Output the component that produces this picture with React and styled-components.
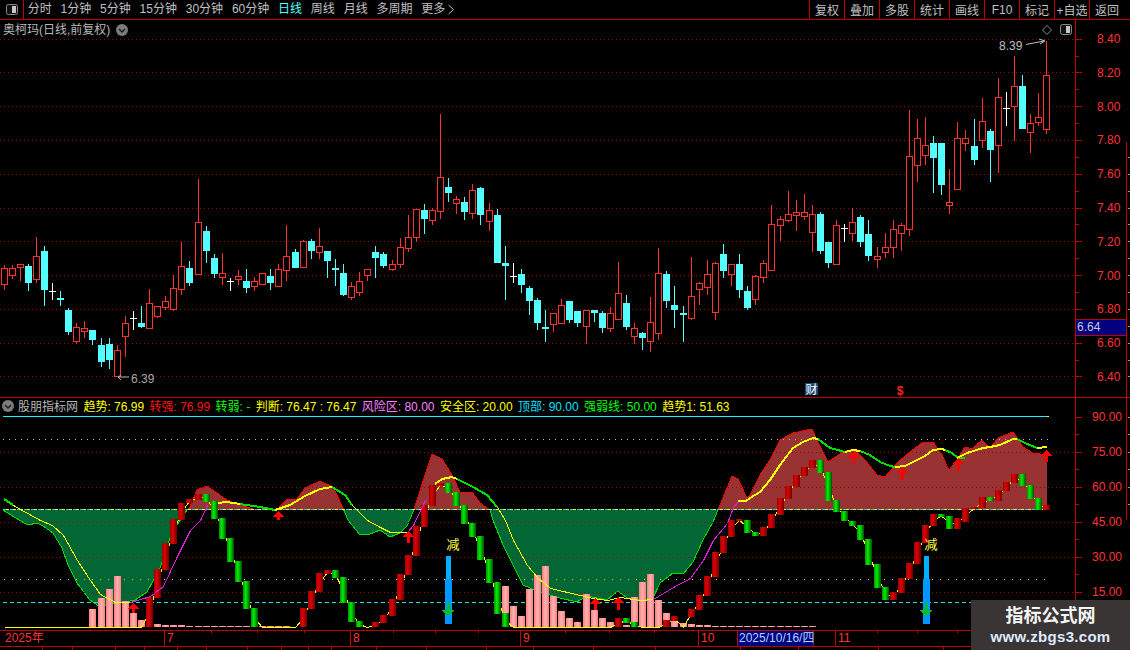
import React from 'react';
import styled, { createGlobalStyle } from 'styled-components';

const CJK = `"Liberation Sans", "Noto Sans CJK SC", sans-serif`;
const RED_LINE = '#c00000';
const AXIS_RED = '#ff3232';
const GRID_RED = '#8a0c0c';

const GlobalStyle = createGlobalStyle`
  html, body {
    margin: 0;
    background: #000;
    overflow: hidden;
  }
`;

const Screen = styled.div`
  position: relative;
  display: flex;
  flex-direction: column;
  width: 1130px;
  height: 650px;
  background: #000;
  overflow: hidden;
  font-family: ${CJK};
  font-size: 12px;
  color: #c0c0c0;
`;

const Toolbar = styled.div`
  display: flex;
  justify-content: space-between;
  height: 19px;
  flex: none;
  border-bottom: 1px solid ${RED_LINE};
`;

const NavGroup = styled.div`
  display: flex;
  align-items: center;
  gap: 8.8px;
`;

const IconCell = styled.div`
  display: flex;
  align-items: center;
  justify-content: center;
  width: 23px;
  height: 19px;
  margin-right: -5px;
  border-right: 1px solid ${RED_LINE};
`;

const NavItem = styled.span`
  line-height: 19px;
  white-space: nowrap;
  display: inline-flex;
  align-items: center;
  gap: 2px;
  color: ${(p) => (p.$active ? '#54ffff' : '#c0c0c0')};
`;

const ToolGroup = styled.div`
  display: flex;
`;

const ToolButton = styled.div`
  display: flex;
  align-items: center;
  justify-content: center;
  box-sizing: border-box;
  width: ${(p) => (p.$wide ? '41px' : '35px')};
  height: 19px;
  padding-right: ${(p) => (p.$wide ? '6px' : '0')};
  border-left: 1px solid ${RED_LINE};
  white-space: nowrap;
`;

const Pane = styled.div`
  display: flex;
  flex: none;
  box-sizing: border-box;
  height: ${(p) => p.$height}px;
  border-top: ${(p) => (p.$ruled ? `1px solid ${RED_LINE}` : 'none')};
`;

const Plot = styled.div`
  position: relative;
  width: 1075px;
  height: 100%;
  flex: none;
  svg {
    display: block;
  }
`;

const Axis = styled.div`
  position: relative;
  flex: 1;
  height: 100%;
  svg {
    display: block;
  }
`;

const PriceTag = styled.div`
  position: absolute;
  left: 1px;
  top: 299px;
  box-sizing: border-box;
  width: 51px;
  height: 17px;
  padding-left: 1px;
  line-height: 15px;
  background: #000080;
  border-top: 1px solid ${RED_LINE};
  border-bottom: 1px solid ${RED_LINE};
  border-right: 1px solid ${RED_LINE};
  color: #c8c8d8;
`;

const ChartTitle = styled.div`
  position: absolute;
  top: 2px;
  left: 3px;
  display: flex;
  align-items: center;
  gap: 6px;
  line-height: 16px;
  color: #b8b8b8;
`;

const Legend = styled.div`
  position: absolute;
  top: 0;
  left: 2px;
  display: flex;
  align-items: center;
  gap: 5.4px;
  height: 15px;
  white-space: nowrap;
`;

const LegendName = styled.span`
  display: flex;
  align-items: center;
  gap: 4px;
  color: #b8b8b8;
`;

const LegendItem = styled.span`
  color: ${(p) => p.$color};
`;

const TimeAxis = styled.div`
  position: relative;
  display: flex;
  flex: none;
  height: 15px;
  border-top: 1px solid ${RED_LINE};
  border-bottom: 1px solid ${RED_LINE};
  color: ${AXIS_RED};
  font-size: 12px;
  line-height: 15px;
`;

const TimeCell = styled.div`
  box-sizing: border-box;
  width: ${(p) => p.$width}px;
  padding-left: ${(p) => (p.$first ? '5px' : '2px')};
  border-left: ${(p) => (p.$first ? 'none' : `1px solid ${RED_LINE}`)};
  overflow: hidden;
  white-space: nowrap;
`;

const DateCell = styled.div`
  box-sizing: border-box;
  width: 77px;
  padding-left: 1px;
  background: #000080;
  border-left: 1px solid ${RED_LINE};
  border-right: 1px solid ${RED_LINE};
  color: #a8d8ff;
  font-size: 12px;
  white-space: nowrap;
`;

const TickLayer = styled.svg`
  position: absolute;
  left: 0;
  top: 0;
`;

const BottomTabs = styled.div`
  display: flex;
  flex: 1;
`;

const BottomTab = styled.div`
  box-sizing: border-box;
  width: ${(p) => p.$width}px;
  border-right: 1px solid ${RED_LINE};
`;

const Watermark = styled.div`
  position: absolute;
  right: 0;
  bottom: 0;
  display: flex;
  flex-direction: column;
  align-items: center;
  width: 159px;
  height: 50px;
  padding-top: 4px;
  box-sizing: border-box;
  background: #3a3535;
  font-weight: 700;
`;

const WatermarkTitle = styled.div`
  font-size: 18px;
  line-height: 24px;
  color: #f4f4f4;
`;

const WatermarkUrl = styled.div`
  font-size: 15px;
  line-height: 17px;
  letter-spacing: 0.3px;
  color: #dfeaff;
`;

const NAV = ['分时', '1分钟', '5分钟', '15分钟', '30分钟', '60分钟', '日线', '周线', '月线', '多周期'];
const TOOLS = ['复权', '叠加', '多股', '统计', '画线', 'F10', '标记', '+自选'];

const candleX = (i) => 4 + i * 8 + Math.floor(i / 12);

// price candles, values read at 3x: [type, wick top, body top, body bottom, wick bottom]
const rowsA = [
  ['r',106,115,161,179],['r',106,115,134,147],['r',102,102,110,153],['c',102,108,159,183],['r',22,79,146,159],
  ['c',48,63,180,228],['w',159,184,184,210],['c',183,204,209,228],['c',234,240,306,315],['r',280,292,332,342],
  ['r',273,295,302,324],['c',300,300,330,345],['c',324,345,396,411],['c',324,342,390,417],['r',346,361,439,439],
  ['r',259,280,317,381],['w',243,265,265,300],['c',228,279,291,294],['r',177,220,293,293],['r',229,229,257,264],
  ['r',198,214,231,240],['r',134,175,236,243],['r',36,109,177,195],['c',93,114,159,168],['r',-153,-24,131,131],
  ['c',-12,3,63,99],['c',72,84,132,144],['r',69,130,140,165],['w',144,154,154,183],['r',120,139,146,165],
  ['c',117,153,174,189],['r',141,154,167,183],['r',130,130,161,165],['c',117,138,159,180],['r',102,118,167,167],
  ['r',-15,79,119,153],['c',57,66,114,114],['r',30,34,110,114],['c',27,33,63,87],['r',-6,49,65,87],
  ['c',63,63,93,144],['c',87,114,118,168],['c',102,129,195,198],['r',156,169,201,210],['r',126,154,185,198],
  ['r',118,118,134,153],['c',48,66,84,144],
];
const rowsB = [
  ['c',456,462,498,504],['r',480,493,506,513],['r',414,442,491,504],['r',345,412,443,456],['r',328,328,410,426],
  ['c',312,330,357,402],['r',324,331,359,375],['r',42,232,332,357],['c',234,261,279,306],['r',288,298,308,342],
  ['c',291,306,336,360],['r',252,271,339,357],['c',261,264,345,375],['r',309,331,362,393],['c',327,345,489,489],
  ['c',438,489,498,600],['w',489,528,528,549],['c',507,522,555,579],['c',558,564,603,645],['c',594,600,669,690],
  ['c',630,681,684,726],['r',640,640,671,696],['r',597,616,668,669],['c',603,603,660,669],['c',633,633,669,681],
  ['r',631,631,677,732],['c',630,630,639,666],['c',633,639,684,699],['r',621,640,683,696],['r',486,580,656,656],
  ['c',585,609,681,690],['r',669,685,707,732],['c',696,699,714,750],['r',591,667,722,756],['r',444,520,698,720],
  ['c',513,522,603,624],['c',558,615,630,684],['c',618,639,645,726],['r',471,589,653,660],['r',546,550,567,615],
  ['r',480,523,560,585],['r',486,490,635,660],['c',432,462,513,534],['r',493,493,521,558],['c',462,492,570,594],
  ['c',558,573,624,630],['r',526,529,596,615],
  ['r',480,490,530,548],['r',315,373,510,513],['r',348,358,374,423],['r',273,343,359,366],['r',300,337,344,393],
  ['r',282,337,347,360],['r',315,343,395,456],['c',336,342,453,462],['c',426,426,489,504],['r',360,376,491,491],
  ['w',372,384,384,426],['r',324,367,398,423],['c',345,351,426,441],['c',360,402,468,483],['r',441,469,476,504],
  ['r',399,442,455,474],['r',360,388,440,474],['r',369,376,398,453],['r',30,169,388,408],['r',57,115,196,246],
  ['r',51,136,166,195],['c',108,129,174,279],['c',129,129,255,285],['r',207,307,314,342],['r',66,115,266,266],
  ['r',90,115,130,153],['c',57,138,180,195],
];
const rowsC = [
  ['r',295,364,419,444],['c',387,393,450,546],['r',234,292,436,519],['w',276,323,323,378],['r',168,259,319,423],
  ['c',225,258,386,386],['r',342,370,395,459],['r',279,350,365,378],['r',123,226,386,403],
];
const toPx = (rows, offset) =>
  rows.map(([t, a, b, c, d]) => [t, a, b, c, d].map((v, n) => (n === 0 ? v : Math.round(offset + v / 3))));
const CANDLES = [...toPx(rowsA, 230), ...toPx(rowsB, 100), ...toPx(rowsC, 0)];

const PRICES = ['8.40', '8.20', '8.00', '7.80', '7.60', '7.40', '7.20', '7.00', '6.80', '6.60', '6.40'];
const priceY = (n) => 38.6 + n * 33.78;

function Candle({ i, row }) {
  const [type, wt, bt, bb, wb] = row;
  const x = candleX(i);
  if (type === 'w') {
    return (
      <g fill="#fff">
        <rect x={x} y={wt} width="1" height={wb - wt} />
        <rect x={x - 3} y={bt} width="7" height="1" />
      </g>
    );
  }
  if (type === 'c') {
    return (
      <g fill="#54ffff">
        <rect x={x} y={wt} width="1" height={wb - wt} />
        <rect x={x - 3} y={bt} width="7" height={Math.max(bb - bt, 2)} />
      </g>
    );
  }
  return (
    <g fill="#ff3232">
      <rect x={x} y={wt} width="1" height={Math.max(bt - wt, 0)} />
      <rect x={x} y={bb} width="1" height={Math.max(wb - bb, 0)} />
      <rect x={x - 2.5} y={bt + 0.5} width="6" height={Math.max(bb - bt, 1)} fill="#000" stroke="#ff3232" />
    </g>
  );
}

function PanelIcon({ x = 0, y = 0 }) {
  return (
    <g transform={`translate(${x} ${y})`}>
      <rect x="0.5" y="0.5" width="11" height="10" rx="2" fill="#111" stroke="#8a8a8a" />
      <rect x="6" y="2" width="4" height="7" fill="#c8c8c8" />
    </g>
  );
}

function CircleDown() {
  return (
    <svg width="12" height="12" viewBox="0 0 12 12">
      <circle cx="6" cy="6" r="6" fill="#7c7c7c" />
      <path d="M3 5 L6 8 L9 5" fill="none" stroke="#1c1c1c" strokeWidth="1.5" />
    </svg>
  );
}

function PriceChart() {
  return (
    <svg width="1075" height="377" viewBox="0 20 1075 377">
      {PRICES.map((p, n) => (
        <line key={p} x1="0" x2="1075" y1={Math.round(priceY(n)) + 0.5} y2={Math.round(priceY(n)) + 0.5}
          stroke={GRID_RED} strokeDasharray="1 3" shapeRendering="crispEdges" />
      ))}
      <g shapeRendering="crispEdges">
        {CANDLES.map((row, i) => <Candle key={i} i={i} row={row} />)}
      </g>
      <text x="999" y="50" fill="#c0c0c0" fontSize="12" fontFamily="Liberation Sans">8.39</text>
      <path d="M1026 44.5 L1044 41 M1039 39 L1045 41 L1040 44" fill="none" stroke="#c0c0c0" />
      <text x="131" y="383" fill="#a8a8a8" fontSize="12" fontFamily="Liberation Sans">6.39</text>
      <path d="M129 377 L118 377 M121 375 L118 377 L121 380" fill="none" stroke="#b0b0b0" />
      <path d="M1047 25.5 L1051.5 30 L1047 34.5 L1042.5 30 Z" fill="none" stroke="#8a8a8a" />
      <PanelIcon x={1060} y={24} />
      <rect x="805" y="383" width="13" height="12" fill="#1a4a7a" />
      <text x="811.5" y="393.5" fill="#fff" fontSize="12" textAnchor="middle" fontFamily={CJK}>财</text>
      <text x="900" y="395" fill="#ff2020" fontSize="12" fontWeight="700" textAnchor="middle" fontFamily="Liberation Sans">$</text>
    </svg>
  );
}

function ValueAxis({ height, top, labels, ticks, edgeTop, edgeBottom }) {
  return (
    <svg width="55" height={height} viewBox={`1075 ${top} 55 ${height}`}>
      <line x1="1075.5" x2="1075.5" y1={top} y2={top + height} stroke={RED_LINE} />
      {ticks.map((t) => (
        <rect key={t.y} x="1075" y={Math.round(t.y)} width={t.major ? 7 : 4} height="1" fill={RED_LINE} />
      ))}
      <line x1="1126.5" x2="1126.5" y1={edgeTop} y2={edgeBottom} stroke={RED_LINE} />
      {ticks.map((t) => (
        t.y > edgeTop && t.y < edgeBottom
          ? <rect key={t.y} x="1128" y={Math.round(t.y)} width="2" height="1" fill="#a0a0a0" />
          : null
      ))}
      {labels.map((l) => (
        <text key={l.text} x={l.x} y={l.y + 4.5} fill={AXIS_RED} fontSize="12" fontFamily="Liberation Sans">{l.text}</text>
      ))}
    </svg>
  );
}

const upperTicks = [];
PRICES.forEach((_, n) => {
  upperTicks.push({ y: priceY(n), major: true });
  if (n < PRICES.length - 1) upperTicks.push({ y: priceY(n) + 16.9, major: false });
});
const upperLabels = PRICES.map((p, n) => ({ text: p, x: 1097, y: priceY(n) }));

// lower pane
const levelY = (v) => 416.7 + (90 - v) * (35 / 15);
const lowerTicks = [];
[90, 75, 60, 45, 30, 15].forEach((v) => {
  lowerTicks.push({ y: levelY(v), major: true });
  lowerTicks.push({ y: levelY(v) + 17.5, major: false });
});
const lowerLabels = [90, 75, 60, 45, 30, 15].map((v) => ({ text: `${v}.00`, x: 1092, y: levelY(v) }));

const ENVELOPE = [
  [3,510],[19,520],[28,525],[37,523],[43,526],[53,533],[62,548],[68,565],[77,583],[90,600],[100,607],[110,604],
  [125,602],[135,600],[147,592],[160,568],[170,538],[177,525],[187,510],[190,507],[197,490],[207,486],[217,493],
  [227,500],[240,505],[253,509],[277,510],[287,499],[297,499],[305,488],[320,481],[333,487],[343,508],[348,520],
  [360,535],[370,534],[380,530],[390,537],[400,533],[407,526],[413,512],[432,454],[442,459],[452,475],[460,492],
  [472,492],[480,503],[490,510],[493,520],[503,545],[513,565],[523,585],[537,591],[550,595],[560,598],[577,602],
  [587,596],[607,600],[618,591],[627,598],[643,600],[653,598],[660,583],[673,573],[683,574],[693,562],[703,540],
  [713,522],[718,510],[732,476],[738,479],[747,498],[750,495],[760,475],[770,460],[780,440],[793,433],[812,429],
  [817,440],[828,462],[843,452],[853,449],[865,460],[877,475],[885,477],[898,462],[910,452],[923,442],[933,442],
  [942,455],[949,470],[957,460],[965,447],[972,449],[982,440],[990,448],[998,438],[1013,432],[1023,447],[1033,453],
  [1047,455],[1047,510],
];

// thick and thin stretches of the trend line, in drawing order
const TREND = [
  { c: '#00e000', w: 2, p: [[4,499],[13,505]] },
  { c: '#ffff00', w: 1, p: [[13,505],[20,509],[40,520],[52,525],[63,535],[77,560],[90,580],[100,594],[115,602],[130,602]] },
  { c: '#e020e0', w: 1, p: [[130,602],[150,596],[163,586],[177,556],[190,530],[200,520],[207,505]] },
  { c: '#ffff00', w: 2, p: [[218,503],[227,502],[240,504]] },
  { c: '#00e000', w: 2, p: [[240,504],[260,507],[275,510]] },
  { c: '#ffff00', w: 2, p: [[275,510],[290,505],[305,496],[320,489],[332,487]] },
  { c: '#00e000', w: 2, p: [[332,487],[345,495],[352,505]] },
  { c: '#ffff00', w: 1, p: [[352,505],[367,520],[380,527],[390,532],[407,532]] },
  { c: '#e020e0', w: 1, p: [[407,532],[413,525],[425,500]] },
  { c: '#ffff00', w: 2, p: [[435,484],[442,479],[452,477],[457,479]] },
  { c: '#00e000', w: 2, p: [[457,479],[473,487],[487,495],[497,507]] },
  { c: '#ffff00', w: 1, p: [[497,507],[505,520],[513,540],[527,565],[537,577],[550,588],[580,595],[593,598],[607,600],[620,597],[640,600],[653,599]] },
  { c: '#e020e0', w: 1, p: [[653,599],[673,587],[690,578],[703,560],[713,540],[727,523],[733,507],[738,501]] },
  { c: '#ffff00', w: 2, p: [[738,501],[746,501],[750,498],[760,492],[770,480],[780,465],[793,448],[803,442],[813,438],[818,439]] },
  { c: '#00e000', w: 2, p: [[818,439],[830,448],[845,452]] },
  { c: '#ffff00', w: 2, p: [[845,452],[853,450],[860,451]] },
  { c: '#00e000', w: 2, p: [[860,451],[870,455],[880,462],[890,466],[895,467]] },
  { c: '#ffff00', w: 2, p: [[895,467],[905,466],[915,461],[925,456],[933,450],[942,449],[945,450]] },
  { c: '#00e000', w: 2, p: [[945,450],[952,453],[958,458],[965,458]] },
  { c: '#ffff00', w: 2, p: [[957,458],[967,453],[983,448],[990,447],[1000,445],[1013,439],[1017,439]] },
  { c: '#00e000', w: 2, p: [[1017,439],[1025,443],[1037,448]] },
  { c: '#ffff00', w: 2, p: [[1037,448],[1047,447]] },
];

// oscillator candles: index -> [colour, top, bottom]
const OSC = {
  18:['r',597,627],19:['r',569,598],20:['r',543,570],21:['r',519,544],22:['r',503,520],23:['r',499,503],24:['r',494,500],
  25:['g',494,502],26:['g',501,519],27:['g',518,539],28:['g',538,562],29:['g',561,582],30:['g',581,609],31:['g',608,627],
  37:['r',608,627],38:['r',591,609],39:['r',573,592],40:['r',570,574],41:['g',570,578],42:['g',577,603],43:['g',602,622],44:['g',621,627],
  46:['r',622,627],47:['r',615,623],48:['r',599,616],49:['r',574,600],50:['r',555,575],51:['r',526,556],52:['r',505,527],53:['r',485,506],54:['r',483,486],
  55:['g',483,493],56:['g',492,506],57:['g',505,524],58:['g',523,537],59:['g',536,560],60:['g',559,583],61:['g',582,614],62:['g',613,627],
  76:['r',618,627],77:['g',618,623],78:['g',622,627],82:['r',620,627],83:['r',616,621],85:['r',609,617],86:['r',595,610],87:['r',576,596],88:['r',552,577],
  89:['r',536,553],90:['r',520,537],91:['r',519,521],92:['g',520,533],93:['g',532,536],94:['r',527,536],95:['r',514,528],96:['r',498,515],97:['r',486,499],
  98:['r',475,487],99:['r',467,476],100:['r',460,468],101:['g',460,473],102:['g',472,501],103:['g',500,512],104:['g',511,521],105:['g',521,526],
  106:['g',525,540],107:['g',539,565],108:['g',564,588],109:['g',587,600],110:['r',592,600],111:['r',578,593],112:['r',563,579],113:['r',542,564],
  114:['r',525,543],115:['r',514,526],116:['g',514,517],117:['g',516,529],118:['r',518,529],119:['r',508,522],120:['r',507,509],121:['r',497,508],
  122:['g',497,501],123:['r',490,501],124:['r',482,491],125:['r',474,483],126:['g',474,486],127:['g',485,499],128:['g',498,510],129:['r',505,510],
};

// pink bars: index -> top
const PINK = {
  11:609,12:598,13:589,14:576,15:601,16:613,17:620,19:624,
  62:586,63:606,64:616,65:589,66:575,67:566,68:596,69:611,70:618,71:622,72:594,73:610,74:618,75:622,
  77:625,78:597,79:582,80:574,81:600,82:613,83:621,84:623,85:624,86:625,87:625,88:626,
};
for (let i = 20; i <= 35; i++) PINK[i] = i < 23 ? 625 : 626;
for (let i = 89; i <= 100; i++) PINK[i] = 626;

const UP_ARROWS = [[133.5,603,613],[278,511,520],[408,531,543],[595,598,610],[618,597,610],[853,452,463],[902,467,480],[958,458,471],[1046,450,462]];
const BLUE_BARS = [448, 926];

const pts = (p) => p.map(([x, y]) => `${x},${y}`).join(' ');

const oscLine = () => {
  const out = [];
  for (let i = 0; i < 130; i++) {
    const o = OSC[i];
    out.push([candleX(i), o ? (o[1] + o[2]) / 2 : 627]);
  }
  return out;
};

function UpArrow({ x, top, bottom }) {
  return (
    <path d={`M${x} ${top} L${x + 6} ${top + 6} L${x + 1.5} ${top + 6} L${x + 1.5} ${bottom} L${x - 1.5} ${bottom} L${x - 1.5} ${top + 6} L${x - 6} ${top + 6} Z`} fill="#ff0000" />
  );
}

function SignalBar({ x }) {
  return (
    <g>
      <rect x={x - 2.5} y="556" width="5" height="23" fill="#00b0ff" />
      <rect x={x - 3.5} y="579" width="7" height="45" fill="#0098ff" />
      <path d={`M${x} 617 L${x + 6} 610 L${x + 1.5} 610 L${x + 1.5} 603 L${x - 1.5} 603 L${x - 1.5} 610 L${x - 6} 610 Z`} fill="#00c030" />
      <text x={x + 5} y="549" fill="#ffff40" fontSize="13" textAnchor="middle" fontFamily={CJK}>减</text>
    </g>
  );
}

function IndicatorChart() {
  const envLine = pts(ENVELOPE.slice(0, -1));
  return (
    <svg width="1075" height="232" viewBox="0 398 1075 232">
      <defs>
        <clipPath id="aboveMid"><rect x="0" y="398" width="1075" height="112" /></clipPath>
        <clipPath id="belowMid"><rect x="0" y="510" width="1075" height="120" /></clipPath>
        <linearGradient id="oscGreen" x1="0" x2="1" y1="0" y2="0">
          <stop offset="0" stopColor="#009000" />
          <stop offset="0.4" stopColor="#00f000" />
          <stop offset="1" stopColor="#005000" />
        </linearGradient>
        <linearGradient id="oscRed" x1="0" x2="1" y1="0" y2="0">
          <stop offset="0" stopColor="#a00000" />
          <stop offset="0.4" stopColor="#e00000" />
          <stop offset="1" stopColor="#700000" />
        </linearGradient>
        <linearGradient id="pinkBar" x1="0" x2="1" y1="0" y2="0">
          <stop offset="0" stopColor="#ff7f7f" />
          <stop offset="0.5" stopColor="#ffb0b0" />
          <stop offset="1" stopColor="#ff7f7f" />
        </linearGradient>
      </defs>

      <polygon points={pts(ENVELOPE)} fill="#993333" clipPath="url(#aboveMid)" />
      <polygon points={pts(ENVELOPE)} fill="#036635" clipPath="url(#belowMid)" />
      <g shapeRendering="crispEdges">
        <polyline points={envLine} fill="none" stroke="#ff0000" clipPath="url(#aboveMid)" />
        <polyline points={envLine} fill="none" stroke="#00e000" clipPath="url(#belowMid)" />

        <line x1="3" x2="1047" y1="416.5" y2="416.5" stroke="#00ffff" />
        <line x1="1047" x2="1049" y1="416.5" y2="416.5" stroke="#ffff00" />
        <line x1="3" x2="1049" y1="439.5" y2="439.5" stroke="#e0a0e0" strokeDasharray="1 5" />
        {[75, 60, 45, 30, 15].map((v) => (
          <line key={v} x1="0" x2="1075" y1={Math.round(levelY(v)) + 0.5} y2={Math.round(levelY(v)) + 0.5}
            stroke={GRID_RED} strokeDasharray="1 3" />
        ))}
        <line x1="3" x2="1047" y1="509.5" y2="509.5" stroke="#20d8d8" strokeDasharray="4 3" />
        <line x1="6" x2="1047" y1="509.5" y2="509.5" stroke="#ffff20" strokeDasharray="3 4" />
        <line x1="4" x2="1047" y1="579.5" y2="579.5" stroke="#ffff30" strokeDasharray="1 7" />
        <line x1="3" x2="1047" y1="602.5" y2="602.5" stroke="#20e0e0" strokeDasharray="4 3" />

        {Object.entries(PINK).map(([i, top]) => (
          <rect key={i} x={candleX(+i) - 3} y={top} width="7" height={627 - top} fill="url(#pinkBar)" />
        ))}
        <polyline points={pts(oscLine())} fill="none" stroke="#ffff00" transform="translate(0.5 0.5)" />
        {Object.entries(OSC).map(([i, [c, top, bottom]]) => (
          <rect key={i} x={candleX(+i) - 3} y={top} width="7" height={bottom - top}
            fill={c === 'g' ? 'url(#oscGreen)' : 'url(#oscRed)'} />
        ))}
        {TREND.map((t, n) => (
          <polyline key={n} points={pts(t.p)} fill="none" stroke={t.c} strokeWidth={t.w}
            transform={t.w === 1 ? 'translate(0.5 0.5)' : undefined} />
        ))}
        {UP_ARROWS.map(([x, top, bottom]) => <UpArrow key={x} x={x} top={top} bottom={bottom} />)}
        {BLUE_BARS.map((x) => <SignalBar key={x} x={x} />)}
      </g>
    </svg>
  );
}

const LEGEND = [
  ['#ffff00', '趋势: 76.99'],
  ['#ff1010', '转强: 76.99'],
  ['#00ff00', '转弱: -'],
  ['#ffff00', '判断: 76.47 : 76.47'],
  ['#ff80ff', '风险区: 80.00'],
  ['#ffff00', '安全区: 20.00'],
  ['#00e0ff', '顶部: 90.00'],
  ['#00ff00', '强弱线: 50.00'],
  ['#ffff00', '趋势1: 51.63'],
];

const AXIS_TICKS = [211, 257, 304, 393, 435, 478, 565, 609, 654, 877, 917, 957];
const TAB_WIDTHS = [43, 30, 43, 29, 33, 29, 41, 34, 27, 23, 45, 50, 60, 47, 60, 62, 85, 58, 80, 65];

export default function App() {
  return (
    <Screen>
      <GlobalStyle />
      <Toolbar>
        <NavGroup>
          <IconCell>
            <svg width="12" height="11" viewBox="0 0 12 11"><PanelIcon /></svg>
          </IconCell>
          {NAV.map((n) => <NavItem key={n} $active={n === '日线'}>{n}</NavItem>)}
          <NavItem>
            更多
            <svg width="8" height="11" viewBox="0 0 8 11">
              <path d="M1.5 1 L6.5 5.5 L1.5 10" fill="none" stroke="#c0c0c0" />
            </svg>
          </NavItem>
        </NavGroup>
        <ToolGroup>
          {TOOLS.map((t) => <ToolButton key={t}>{t}</ToolButton>)}
          <ToolButton $wide>返回</ToolButton>
        </ToolGroup>
      </Toolbar>

      <Pane $height={377}>
        <Plot>
          <PriceChart />
          <ChartTitle>
            奥柯玛(日线,前复权)
            <CircleDown />
          </ChartTitle>
        </Plot>
        <Axis>
          <ValueAxis height={377} top={20} labels={upperLabels} ticks={upperTicks} edgeTop={142} edgeBottom={397} />
          <PriceTag>6.64</PriceTag>
        </Axis>
      </Pane>

      <Pane $height={233} $ruled>
        <Plot>
          <IndicatorChart />
          <Legend>
            <LegendName>
              <CircleDown />
              股朋指标网
            </LegendName>
            {LEGEND.map(([c, text]) => <LegendItem key={text} $color={c}>{text}</LegendItem>)}
          </Legend>
        </Plot>
        <Axis>
          <ValueAxis height={232} top={398} labels={lowerLabels} ticks={lowerTicks} edgeTop={398} edgeBottom={520} />
        </Axis>
      </Pane>

      <TimeAxis>
        <TimeCell $first $width={164}>2025年</TimeCell>
        <TimeCell $width={186}>7</TimeCell>
        <TimeCell $width={170}>8</TimeCell>
        <TimeCell $width={178}>9</TimeCell>
        <TimeCell $width={39}>10</TimeCell>
        <DateCell>2025/10/16/四</DateCell>
        <TimeCell $first $width={21} />
        <TimeCell $width={136}>11</TimeCell>
        <TickLayer width="1130" height="3">
          {AXIS_TICKS.map((x) => <rect key={x} x={x} y="0" width="1" height="2" fill={RED_LINE} />)}
        </TickLayer>
      </TimeAxis>

      <BottomTabs>
        {TAB_WIDTHS.map((w, n) => <BottomTab key={n} $width={w} />)}
      </BottomTabs>

      <Watermark>
        <WatermarkTitle>指标公式网</WatermarkTitle>
        <WatermarkUrl>www.zbgs3.com</WatermarkUrl>
      </Watermark>
    </Screen>
  );
}
